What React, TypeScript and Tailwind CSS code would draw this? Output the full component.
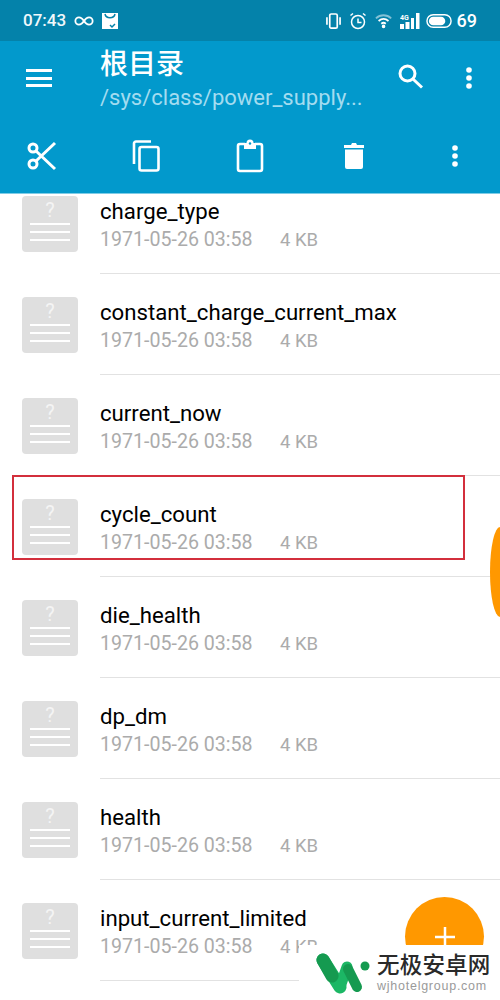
const rows = ["charge_type","constant_charge_current_max","current_now","cycle_count","die_health","dp_dm","health","input_current_limited"];

function FileIcon() {
  return (
    <div className="w-[56px] h-[56px] rounded-[4px] bg-[#dfdfdf] flex flex-col items-center shrink-0">
      <span className="text-[#f4f4f4] text-[20px] leading-[20px] mt-[4px] h-[22px] font-['Roboto',sans-serif]">?</span>
      <span className="w-[40px] h-[2px] bg-white mt-[1px]" />
      <span className="w-[40px] h-[2px] bg-white mt-[6px]" />
      <span className="w-[40px] h-[2px] bg-white mt-[6px]" />
    </div>
  );
}

function Row({ name }: { name: string }) {
  return (
    <div className="h-[101px] flex pl-[22px] shrink-0">
      <div className="pt-[23px]"><FileIcon /></div>
      <div className="ml-[22px] flex-1 border-b border-[#e2e2e2] h-[101px] pt-[23px]">
        <div className="text-[22.200px] leading-[30px] text-black">{name}</div>
        <div className="flex text-[19.600px] leading-[26px] mt-[1px] text-[#ababab]">
          <span className="w-[180px]">1971-05-26 03:58</span>
          <span className="text-[18.500px]">4 KB</span>
        </div>
      </div>
    </div>
  );
}

function Dots() {
  return (
    <svg width="8" height="24" viewBox="0 0 8 24" fill="white"><circle cx="4" cy="4" r="2.800" /><circle cx="4" cy="12" r="2.800" /><circle cx="4" cy="20" r="2.800" /></svg>
  );
}

export default function App() {
  return (
    <div className="relative w-[500px] h-[1000px] overflow-hidden bg-white font-['Roboto',sans-serif]">
      <div className="relative z-10">
        <div className="h-[41px] bg-[#0482aa] flex items-center justify-between pl-[23px] pr-[23px] text-white text-[17px]">
          <div className="flex items-center gap-[8px]">
            <span className="font-medium text-[#f0f8fb]">07:43</span>
            <svg width="20" height="12" viewBox="0 0 22 12" fill="none" stroke="white" strokeWidth="2"><path d="M11 6C9 3 7.500 2 5.500 2a4 4 0 0 0 0 8c2 0 3.500-1 5.500-4c2-3 3.500-4 5.500-4a4 4 0 0 1 0 8c-2 0-3.500-1-5.500-4z" /></svg>
            <svg width="16" height="16" viewBox="0 0 16 16"><rect width="16" height="16" fill="white" /><path d="M3 1c1 5 9 5 10 0" stroke="#0482aa" strokeWidth="1.500" fill="none" /><path d="M8 12l2 2 3-3" stroke="#0482aa" strokeWidth="1.500" fill="none" /></svg>
          </div>
          <div className="flex items-center">
            <svg width="15" height="18" viewBox="0 0 16 18" fill="none" stroke="white" strokeWidth="1.800"><rect x="4" y="1.500" width="8" height="15" rx="1.500" /><path d="M1 5v8M15 5v8" /></svg>
            <svg className="ml-[8px]" width="18" height="18" viewBox="0 0 18 18" fill="none" stroke="white" strokeWidth="1.500"><circle cx="9" cy="10" r="6.500" /><path d="M9 6.500V10.500H12.500M1.500 3.500L4 1.500M16.500 3.500L14 1.500" /></svg>
            <svg className="ml-[8px]" width="18" height="16" viewBox="0 0 20 16" fill="none" stroke="white" strokeWidth="2"><path d="M1 5C6 0.500 13 0.500 18 5" opacity="0.500" /><path d="M4 8C7.500 5 11.500 5 15 8" /><path d="M7 11C8.500 9.800 10.500 9.800 12 11" /><circle cx="9.500" cy="14" r="1" fill="white" /></svg>
            <svg className="ml-[7px]" width="20" height="16" viewBox="0 0 20 16" fill="white"><rect x="0" y="11" width="4" height="5" /><rect x="5.500" y="9" width="4" height="7" /><rect x="11" y="5" width="3" height="11" /><rect x="16" y="0" width="3.500" height="16" /><text x="0" y="7" fontSize="7" fontWeight="700" fontFamily="Roboto">4G</text></svg>
            <svg className="ml-[6px]" width="27" height="16" viewBox="0 0 28 16" fill="none"><rect x="1" y="1.500" width="25" height="13" rx="6.500" stroke="white" strokeWidth="1.500" /><rect x="3" y="3.500" width="17" height="9" rx="4.500" fill="white" /></svg>
            <span className="ml-[4px] font-medium text-[18px]">69</span>
          </div>
        </div>
        <div className="h-[153px] bg-[#0299cc] border-b border-[#7fcce6] flex flex-col">
          <div className="h-[78px] flex">
            <div className="w-[100px] pl-[26px] pt-[28px] shrink-0">
              <div className="w-[26px] h-[18px] flex flex-col justify-between">
                <span className="h-[3px] bg-white" /><span className="h-[3px] bg-white" /><span className="h-[3px] bg-white" />
              </div>
            </div>
            <div className="flex-1">
              <div className="text-[28px] leading-[36px] mt-[6px] text-white font-medium font-['Roboto','Noto_Sans_CJK_SC',sans-serif]">根目录</div>
              <div className="text-[22px] leading-[28px] mt-[1px] text-[#a3dcf0] w-[270px]">/sys/class/power_supply...</div>
            </div>
            <svg className="mt-[21px] mr-[41px]" width="28" height="28" viewBox="0 0 28 28" fill="none" stroke="white" strokeWidth="3"><circle cx="11.500" cy="11.500" r="7.500" /><path d="M17 17L26 25.500" /></svg>
            <div className="mt-[25px] mr-[27px] shrink-0"><Dots /></div>
          </div>
          <div className="flex items-center -ml-[10px] h-[34px] mt-[20px]">
            <div className="w-[104px] shrink-0 flex justify-center">
              <svg width="30" height="32" viewBox="0 0 30 32" fill="none" stroke="white" strokeWidth="3"><circle cx="6" cy="8" r="4" /><circle cx="6" cy="24" r="4" /><path d="M9 11L28 29M9 21L28 3" /></svg>
            </div>
            <div className="w-[104px] shrink-0 flex justify-center">
              <svg width="28" height="32" viewBox="0 0 28 32" fill="none" stroke="white" strokeWidth="2.600"><path d="M2 24V3.500A2 2 0 0 1 4 1.500H19" /><rect x="7.500" y="7" width="19" height="23.500" rx="2" /></svg>
            </div>
            <div className="w-[104px] shrink-0 flex justify-center">
              <svg width="28" height="34" viewBox="0 0 28 34" fill="none" stroke="white" strokeWidth="2.600"><path d="M9 5H4a2 2 0 0 0-2 2v23a2 2 0 0 0 2 2h20a2 2 0 0 0 2-2V7a2 2 0 0 0-2-2h-5" /><rect x="8" y="4" width="12" height="6" fill="white" stroke="none" /><circle cx="14" cy="4" r="3.500" fill="white" stroke="none" /><circle cx="14" cy="4.500" r="1.200" fill="#0299cc" stroke="none" /></svg>
            </div>
            <div className="w-[104px] shrink-0 flex justify-center">
              <svg width="20" height="28" viewBox="0 0 20 28" fill="white"><path d="M0 3h7l1-2h4l1 2h7v3H0z" /><path d="M1 7.500h18V25a2 2 0 0 1-2 2H3a2 2 0 0 1-2-2z" /></svg>
            </div>
            <div className="w-[98px] shrink-0 flex justify-center"><Dots /></div>
          </div>
        </div>
      </div>
      <div className="flex flex-col -mt-[21px]">
        {rows.map((r) => <Row key={r} name={r} />)}
      </div>
      <div className="absolute left-[12px] top-[475px] w-[453px] h-[85px] border-2 border-[#d32f3c]" />
      <div className="absolute left-[490px] top-[527px] w-[20px] h-[90px] rounded-l-[100%] bg-[#ff9800]" />
      <div className="absolute left-[405px] top-[897px] w-[79px] h-[79px] rounded-full bg-[#ff9800] flex justify-center pt-[30px]">
        <svg width="20" height="20" viewBox="0 0 20 20" stroke="white" strokeWidth="2.500"><path d="M10 0V20M0 10H20" /></svg>
      </div>
      <div className="absolute left-[299px] top-[945px] w-[201px] h-[55px] bg-white flex pl-[16px] pt-[7px]">
        <svg width="60" height="44" viewBox="0 0 60 44" fill="none" strokeLinecap="round">
          <path d="M8 8L25 35" stroke="#1cb765" strokeWidth="13" />
          <path d="M25 35L32 15" stroke="#1cb765" strokeWidth="11" />
          <path d="M8 8L17 24" stroke="#159a50" strokeWidth="13" />
          <path d="M33 17L42 35" stroke="#159a50" strokeWidth="10" />
          <circle cx="50" cy="14" r="4.500" fill="#159a50" />
        </svg>
        <div className="ml-[2px] -mt-[3px] flex flex-col">
          <span className="text-[22.500px] leading-[28px] text-[#2a2a2a] font-medium tracking-[0.2px] font-['Noto_Sans_CJK_SC',sans-serif]">无极安卓网</span>
          <span className="text-[12.500px] leading-[14px] mt-[2px] text-[#9a9a9a] tracking-[0.75px] font-['Liberation_Sans',sans-serif]">wjhotelgroup.com</span>
        </div>
      </div>
    </div>
  );
}
